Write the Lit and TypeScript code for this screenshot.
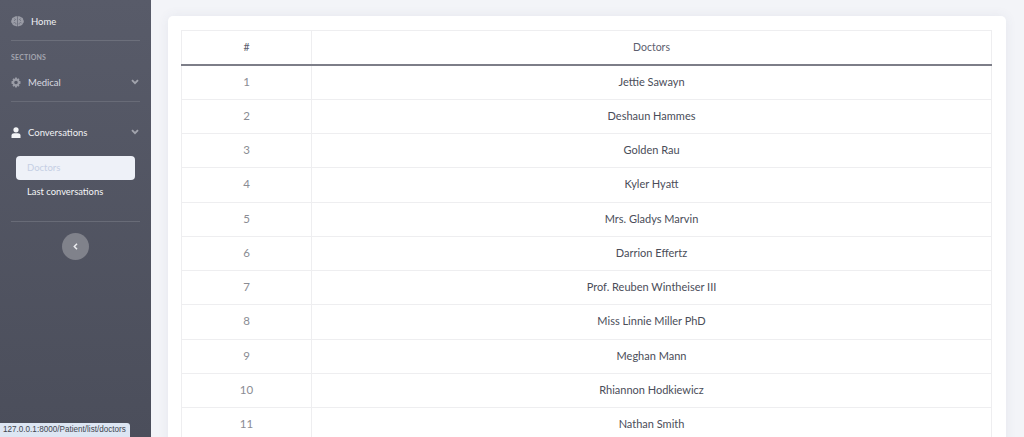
import { LitElement, html, css, svg } from "lit";
import { customElement } from "lit/decorators.js";

const doctors = [
  "Jettie Sawayn", "Deshaun Hammes", "Golden Rau", "Kyler Hyatt", "Mrs. Gladys Marvin",
  "Darrion Effertz", "Prof. Reuben Wintheiser III", "Miss Linnie Miller PhD", "Meghan Mann",
  "Rhiannon Hodkiewicz", "Nathan Smith",
];

const chevron = svg`<path d="M1 1.2 L4 4.2 L7 1.2" fill="none" stroke="currentColor" stroke-width="1.9"/>`;

@customElement("app-root")
export class AppRoot extends LitElement {
  static styles = css`
    :host { display: block; width: 1024px; height: 437px; overflow: hidden; position: relative;
      font-family: Lato, "Open Sans", sans-serif; background: #f3f4f8; }
    .page { display: flex; height: 437px; }
    .side { width: 151px; flex: none; box-sizing: border-box; padding: 0 11px;
      background: linear-gradient(#585b69, #4b4e5b); color: #e8e9ee; font-size: 9.5px; }
    .item { display: flex; align-items: center; }
    .home { height: 41px; padding-top: 2px; box-sizing: border-box; border-bottom: 1px solid #6c6f7b; color: #f0f1f4; }
    .home svg { margin-right: 7px; }
    .ic { color: #9a9ca6; flex: none; }
    .title { font-size: 7px; font-weight: 700; color: #a3a5af; letter-spacing: .2px; margin-top: 12px; height: 9px; line-height: 9px; }
    .med { height: 37px; margin-top: 2px; padding-bottom: 1px; box-sizing: border-box; color: #d9dae0; }
    .conv { height: 36px; margin-top: 12px; box-sizing: border-box; color: #f0f1f4; }
    .med svg.ic, .conv svg.ic { margin-right: 7px; }
    .conv svg.ic { color: #f4f5f7; }
    .chev { margin-left: auto; margin-right: 1px; color: #a2a4ad; flex: none; }
    hr { border: 0; border-top: 1px solid #686b77; margin: 0; }
    .sub { display: flex; flex-direction: column; padding: 0 5px; margin-top: 6px; }
    .active { height: 24px; display: flex; align-items: center; padding: 0 0 1px 11px; box-sizing: border-box; border-radius: 4px;
      background: #eef1f8; color: #c5cfe4; font-size: 9.5px; }
    .link { height: 24px; display: flex; align-items: center; padding: 0 0 1px 11px; box-sizing: border-box; color: #f4f5f7; font-size: 9.4px; }
    .sep { margin-top: 17px; }
    .toggle { width: 27px; height: 27px; border-radius: 50%; background: #80828b; margin: 11px auto 0;
      display: flex; align-items: center; justify-content: center; color: #ecedf0; }
    .main { flex: 1; min-width: 0; padding: 16px 18px 0 17px; }
    .card { background: #fff; border-radius: 5px; padding: 14px 14px 0 13px; height: 500px; box-sizing: border-box;
      box-shadow: 0 0 12px rgba(70,75,110,.08); }
    .table { display: grid; grid-template-columns: 130px 1fr; border: 1px solid #eeeef0; border-bottom: 0;
      color: #4a4d59; font-size: 11px; }
    .table > div { display: flex; align-items: center; justify-content: center; box-sizing: border-box;
      height: 34.27px; padding-bottom: 2px; border-bottom: 1px solid #eeeef0; }
    .table > .num { border-right: 1px solid #eeeef0; color: #8a8c93; font-size: 11.5px; }
    .table > .head { height: 33px; border-bottom: 0; color: #5c5e6e; font-size: 10.5px; }
    .table > .rule { grid-column: 1 / -1; margin: 0 -1px; height: 1.5px; padding: 0; border: 0; background: #7d7e88; }
    .status { position: absolute; left: 0; bottom: 0; height: 14px; padding: 0 4px 0 3px; background: #dde6f3; color: #434650;
      font-size: 8.15px; line-height: 14px; border-top-right-radius: 3px; font-family: "Liberation Sans", sans-serif; }
  `;

  render() {
    return html`
      <div class="page">
        <nav class="side">
          <div class="item home">
            <svg class="ic" width="13" height="11" viewBox="0 0 13 11"><path fill="currentColor" d="M3 1.2 C4 .2 5.5 0 6.5 .8 C7.5 0 9 .2 10 1.2 C11.5 1.4 12.3 2.5 12.2 3.8 C13.2 5 13 6.8 11.8 7.6 C11.5 9.2 10 10 8.7 9.7 C7.9 10.5 7 10.4 6.5 10 C6 10.4 5.1 10.5 4.3 9.7 C3 10 1.5 9.2 1.2 7.6 C0 6.8 -.2 5 .8 3.8 C.7 2.5 1.5 1.4 3 1.2 Z"/><path stroke="#585b69" stroke-width=".6" fill="none" d="M6.5 1 V10 M3.5 2.5 C5 3 4.5 4.5 3 4.5 M9.5 2.5 C8 3 8.5 4.5 10 4.5 M2.5 7 C4 6 5 7 5 8.5 M10.5 7 C9 6 8 7 8 8.5"/></svg>
            Home
          </div>
          <div class="title">SECTIONS</div>
          <div class="item med">
            <svg class="ic" width="10" height="11" viewBox="0 0 10 11"><path fill="currentColor" fill-rule="evenodd" d="M4.2 .5 H5.8 L6.1 1.9 L7.4 1.3 L8.5 2.4 L7.9 3.7 L9.5 4.3 V6.7 L7.9 7.3 L8.5 8.6 L7.4 9.7 L6.1 9.1 L5.8 10.5 H4.2 L3.9 9.1 L2.6 9.7 L1.5 8.6 L2.1 7.3 L.5 6.7 V4.3 L2.1 3.7 L1.5 2.4 L2.6 1.3 L3.9 1.9 Z M5 3.7 A1.8 1.8 0 1 0 5 7.3 A1.8 1.8 0 1 0 5 3.7 Z"/></svg>
            Medical
            <svg class="chev" width="8" height="6" viewBox="0 0 8 6">${chevron}</svg>
          </div>
          <hr />
          <div class="item conv">
            <svg class="ic" width="10" height="11" viewBox="0 0 10 11"><circle cx="5" cy="2.8" r="2.6" fill="currentColor"/><path fill="currentColor" d="M.5 11 V8.6 C.5 7 1.8 6.2 3 6.2 H7 C8.2 6.2 9.5 7 9.5 8.6 V11 Z"/></svg>
            Conversations
            <svg class="chev" width="8" height="6" viewBox="0 0 8 6">${chevron}</svg>
          </div>
          <div class="sub">
            <div class="active">Doctors</div>
            <div class="link">Last conversations</div>
          </div>
          <hr class="sep" />
          <div class="toggle">
            <svg width="5" height="7" viewBox="0 0 5 7"><path d="M4 .8 L1.3 3.5 L4 6.2" fill="none" stroke="currentColor" stroke-width="1.5"/></svg>
          </div>
        </nav>
        <main class="main">
          <div class="card">
            <div class="table">
              <div class="num head">#</div>
              <div class="head">Doctors</div>
              <div class="rule"></div>
              ${doctors.map((d, i) => html`<div class="num">${i + 1}</div><div>${d}</div>`)}
            </div>
          </div>
        </main>
      </div>
      <div class="status">127.0.0.1:8000/Patient/list/doctors</div>
    `;
  }
}
